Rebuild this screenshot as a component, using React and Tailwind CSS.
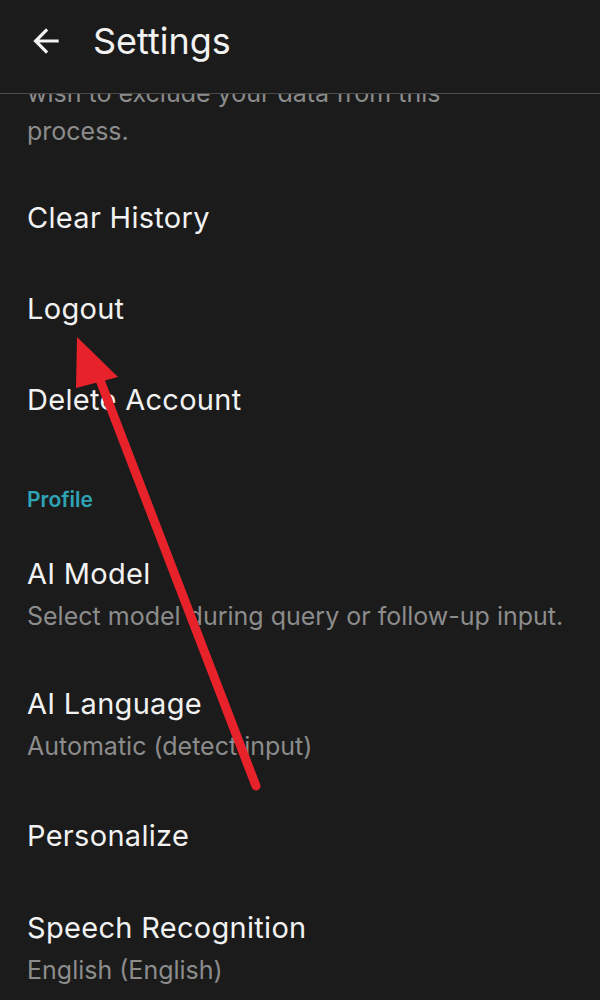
// Settings screen (dark) with a red annotation arrow pointing at "Logout".
const font = { fontFamily: "Inter, 'Liberation Sans', sans-serif" };

function BackIcon() {
  return (
    <svg width="38" height="38" viewBox="0 0 24 24" fill="#f2f2f2">
      <path d="M20 11H7.83l5.59-5.59L12 4l-8 8 8 8 1.41-1.41L7.83 13H20v-2z" />
    </svg>
  );
}

function Row({ title, sub, last }) {
  if (!sub) {
    return (
      <div className="h-[91px] flex items-center px-[27px]">
        <span className="text-[29px] leading-[38px] tracking-[0.3px] text-[#f2f2f2]">{title}</span>
      </div>
    );
  }
  return (
    <div className={last ? "px-[27px] pt-[28px] pb-[25px]" : "px-[27px] py-[25px]"}>
      <div className="text-[29px] leading-[38px] tracking-[0.3px] text-[#f2f2f2]">{title}</div>
      <div className="mt-[4px] text-[25px] leading-[38px] text-[#8c8c8c]">{sub}</div>
    </div>
  );
}

function Annotation() {
  return (
    <svg className="absolute left-0 top-0 pointer-events-none" width="600" height="1000">
      <line x1="100" y1="380" x2="256" y2="786" stroke="#e8222b" strokeWidth="9" strokeLinecap="round" />
      <polygon points="77,337 76,388 118,377" fill="#e8222b" />
    </svg>
  );
}

export default function App() {
  return (
    <div className="relative w-[600px] h-[1000px] overflow-hidden bg-[#1b1b1b]" style={font}>
      <div className="h-[94px] flex items-center pb-[11px] border-b border-[#4a4a4a]">
        <div className="ml-[27px]">
          <BackIcon />
        </div>
        <div className="ml-[28px] text-[36px] leading-[40px] text-[#f2f2f2]">Settings</div>
      </div>

      <div className="h-[905px] overflow-hidden">
        <p className="mt-[-20px] mb-[22px] px-[27px] text-[25px] leading-[38px] text-[#8c8c8c]">
          wish to exclude your data from this
          <br />
          process.
        </p>

        <Row title="Clear History" />
        <Row title="Logout" />
        <Row title="Delete Account" />

        <div className="h-[85px] pt-[41px] px-[27px]">
          <span className="text-[21px] leading-[28px] font-semibold text-[#2ea3b6]">Profile</span>
        </div>

        <Row title="AI Model" sub="Select model during query or follow-up input." />
        <Row title="AI Language" sub="Automatic (detect input)" />
        <Row title="Personalize" />
        <Row title="Speech Recognition" sub="English (English)" last />
      </div>

      <Annotation />
    </div>
  );
}
